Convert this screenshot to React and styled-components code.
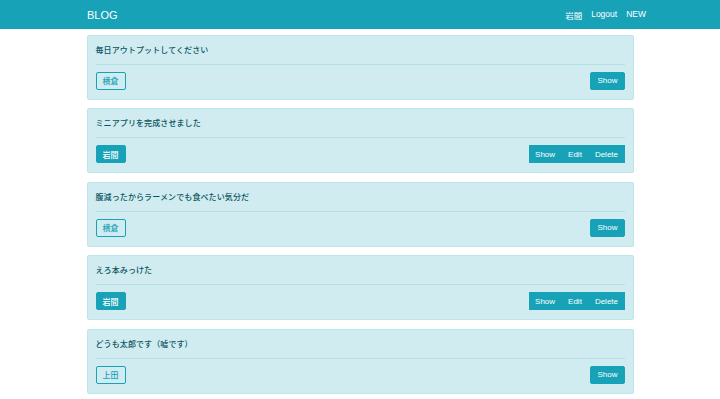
import React from 'react';
import styled, { createGlobalStyle } from 'styled-components';

const GlobalStyle = createGlobalStyle`
  body {
    margin: 0;
    background: #fff;
    font-family: "Liberation Sans", "Noto Sans CJK JP", sans-serif;
  }
`;

const StyledNav = styled.nav`
  height: 29px;
  background: #17a2b8;
  display: flex;
  align-items: center;
  justify-content: space-between;
  padding: 0 74px 0 87px;
  color: white;
`;

const StyledBrand = styled.div`
  font-size: 11px;
`;

const StyledLinks = styled.div`
  display: flex;
  gap: 9px;
  font-size: 8.5px;
`;

const StyledMain = styled.main`
  width: 547px;
  margin: 5.5px auto 0;
  display: flex;
  flex-direction: column;
  gap: 8.5px;
`;

const StyledCard = styled.article`
  background: #d1ecf1;
  border: 1px solid #bee5eb;
  border-radius: 2px;
  color: #0c5460;
  padding: 8px;
  height: 65px;
  box-sizing: border-box;
`;

const StyledTitle = styled.div`
  font-size: 8px;
  font-weight: 500;
  letter-spacing: 0.1px;
  line-height: 13px;
`;

const StyledHr = styled.hr`
  border: 0;
  border-top: 1px solid #b7dfe6;
  margin: 7px 0 7px;
`;

const StyledRow = styled.div`
  display: flex;
  justify-content: space-between;
  align-items: center;
`;

const StyledButton = styled.button`
  font-family: inherit;
  font-size: 8px;
  font-weight: 500;
  height: 18px;
  padding: 0 6px;
  border-radius: 2px;
  border: 1px solid #17a2b8;
  background: ${(p) => (p.$outline ? 'transparent' : '#17a2b8')};
  color: ${(p) => (p.$outline ? '#17a2b8' : '#fff')};
  cursor: pointer;
`;

const StyledGroup = styled.div`
  display: flex;
  background: #17a2b8;
  border-radius: 2px;
  & > button {
    border-radius: 0;
    padding: 0 5.5px;
  }
`;

const posts = [
  { title: '毎日アウトプットしてください', user: '横倉', mine: false },
  { title: 'ミニアプリを完成させました', user: '岩間', mine: true },
  { title: '腹減ったからラーメンでも食べたい気分だ', user: '横倉', mine: false },
  { title: 'えろ本みっけた', user: '岩間', mine: true },
  { title: 'どうも太郎です（嘘です）', user: '上田', mine: false },
];

const App = () => {
  return (
    <>
      <GlobalStyle />
      <StyledNav>
        <StyledBrand>BLOG</StyledBrand>
        <StyledLinks>
          <span>岩間</span>
          <span>Logout</span>
          <span>NEW</span>
        </StyledLinks>
      </StyledNav>
      <StyledMain>
        {posts.map((post, i) => (
          <StyledCard key={i}>
            <StyledTitle>{post.title}</StyledTitle>
            <StyledHr />
            <StyledRow>
              <StyledButton $outline={!post.mine}>{post.user}</StyledButton>
              {post.mine ? (
                <StyledGroup>
                  <StyledButton>Show</StyledButton>
                  <StyledButton>Edit</StyledButton>
                  <StyledButton>Delete</StyledButton>
                </StyledGroup>
              ) : (
                <StyledButton>Show</StyledButton>
              )}
            </StyledRow>
          </StyledCard>
        ))}
      </StyledMain>
    </>
  );
};

export default App;
